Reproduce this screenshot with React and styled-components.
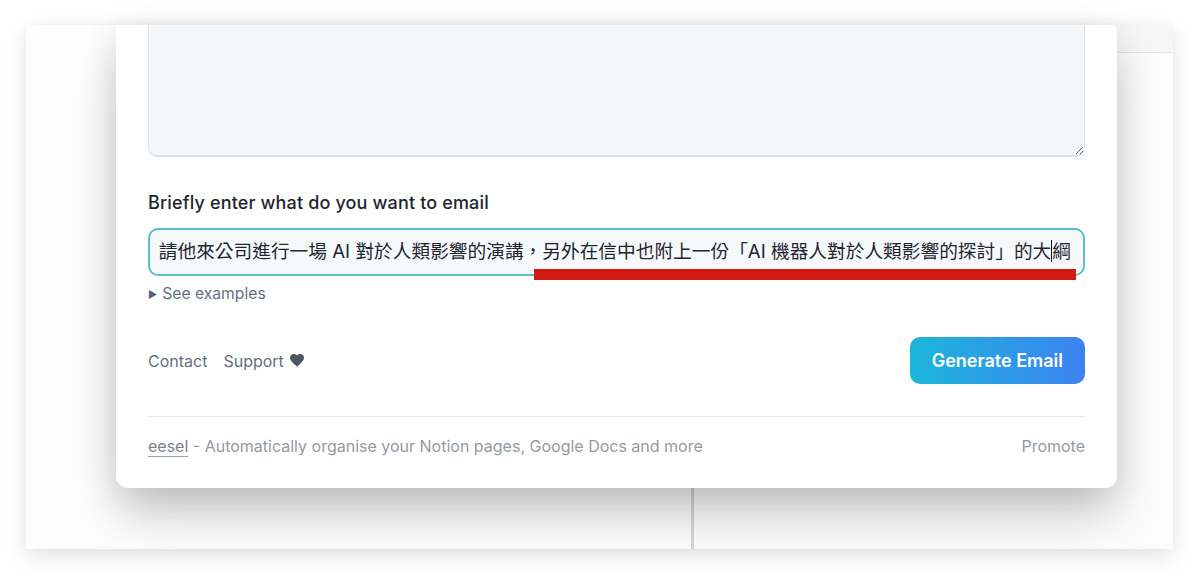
import React from 'react';
import styled, { createGlobalStyle } from 'styled-components';

const Global = createGlobalStyle`
  html, body {
    margin: 0;
    padding: 0;
    background: #ffffff;
  }
  * { box-sizing: border-box; }
`;

export default function App() {
  return (
    <>
      <Global />
      <Page>
        <Window>
          <LeftPane />
          <RightPane>
            <PaneHeader />
          </RightPane>

          <Modal>
            <TextArea defaultValue="" />

            <Label>Briefly enter what do you want to email</Label>
            <InputWrap>
              <InputBox>
                <InputText>
                  請他來公司進行一場 AI 對於人類影響的演講，另外在信中也附上一份「AI 機器人對於人類影響的探討」的大
                  <Caret />
                  綱
                </InputText>
              </InputBox>
              <Mark />
            </InputWrap>

            <Examples>
              <Triangle>▶</Triangle>See examples
            </Examples>

            <Actions>
              <Links>
                <LinkText>Contact</LinkText>
                <LinkText>
                  Support
                  <svg width="14" height="13" viewBox="0 0 24 22" fill="#4b5563">
                    <path d="M12 21.5 10.3 20C4.2 14.5 0 10.8 0 6.3 0 2.7 2.8 0 6.4 0c2.1 0 4.1 1 5.6 2.5C13.5 1 15.5 0 17.6 0 21.2 0 24 2.7 24 6.3c0 4.5-4.2 8.2-10.3 13.7L12 21.5Z" />
                  </svg>
                </LinkText>
              </Links>
              <Button>Generate Email</Button>
            </Actions>

            <Divider />

            <Footer>
              <FooterText>
                <Brand>eesel</Brand> - Automatically organise your Notion pages, Google Docs and more
              </FooterText>
              <FooterText>Promote</FooterText>
            </Footer>
          </Modal>
        </Window>
      </Page>
    </>
  );
}

const Page = styled.div`
  width: 1200px;
  height: 577px;
  padding: 25px 27px 28px 26px;
  overflow: hidden;
`;

const Window = styled.div`
  position: relative;
  display: flex;
  width: 1147px;
  height: 524px;
  background: #ffffff;
  box-shadow: 0 8px 22px rgba(0, 0, 0, 0.1), 0 0 12px rgba(0, 0, 0, 0.04);
`;

const LeftPane = styled.div`
  width: 668px;
  height: 100%;
  background: #fdfdfd;
  border-right: 3px solid #d6d6d6;
`;

const RightPane = styled.div`
  flex: 1;
  height: 100%;
  background: #fcfcfc;
`;

const PaneHeader = styled.div`
  height: 28px;
  border-bottom: 1px solid #e6e6e6;
  background: #f6f6f6;
`;

const Modal = styled.div`
  position: absolute;
  left: 90px;
  top: 0;
  width: 1001px;
  height: 463px;
  padding: 0 32px;
  display: flex;
  flex-direction: column;
  background: #ffffff;
  border-radius: 0 6px 12px 12px;
  overflow: hidden;
  box-shadow: 0 30px 50px -4px rgba(0, 0, 0, 0.2), 0 6px 34px rgba(0, 0, 0, 0.1);
  font-family: Inter, "Noto Sans CJK TC", sans-serif;
`;

const TextArea = styled.textarea`
  display: block;
  width: 100%;
  height: 142px;
  margin-top: -10px;
  background: #f5f8fb;
  border: 1px solid #dce2e8;
  border-bottom-width: 2px;
  border-radius: 9px;
  resize: vertical;
  outline: none;
`;

const Label = styled.div`
  margin-top: 34px;
  font-size: 18px;
  letter-spacing: 0.15px;
  line-height: 24px;
  font-weight: 500;
  color: #1e2530;
`;

const InputWrap = styled.div`
  position: relative;
  margin-top: 13px;
`;

const InputBox = styled.div`
  height: 48px;
  display: flex;
  align-items: center;
  justify-content: flex-end;
  padding: 0 12px 0 2px;
  background: #f6f9fb;
  border: 2px solid #5abdca;
  border-radius: 10px;
  overflow: hidden;
`;

const InputText = styled.span`
  white-space: nowrap;
  font-size: 18.7px;
  line-height: 24px;
  color: #1f2630;
`;

const Caret = styled.span`
  display: inline-block;
  width: 0;
  height: 22px;
  border-left: 1.5px solid #111;
  vertical-align: middle;
  margin-top: -3px;
`;

const Mark = styled.div`
  position: absolute;
  left: 386px;
  top: 41px;
  width: 542px;
  height: 11px;
  background: #d21b10;
`;

const Examples = styled.div`
  margin-top: 8px;
  display: flex;
  align-items: center;
  font-size: 15.7px;
  line-height: 20px;
  color: #667080;
`;

const Triangle = styled.span`
  font-size: 10px;
  margin-right: 5px;
  color: #556070;
`;

const Actions = styled.div`
  margin-top: 33px;
  display: flex;
  align-items: center;
  justify-content: space-between;
`;

const Links = styled.div`
  display: flex;
  align-items: center;
  gap: 16px;
`;

const LinkText = styled.span`
  display: inline-flex;
  align-items: center;
  gap: 6px;
  font-size: 16px;
  color: #64707f;
`;

const Button = styled.button`
  height: 47px;
  padding: 0 22px;
  border: none;
  border-radius: 10px;
  background: linear-gradient(90deg, #1cb6da 0%, #3d82f2 100%);
  color: #ffffff;
  font-family: Inter, sans-serif;
  font-size: 18px;
  font-weight: 600;
  cursor: pointer;
`;

const Divider = styled.div`
  margin-top: 32px;
  height: 1px;
  background: #e6e9ed;
  box-shadow: 0 1px 1px rgba(0, 0, 0, 0.03);
`;

const Footer = styled.div`
  margin-top: 19px;
  display: flex;
  justify-content: space-between;
  align-items: center;
`;

const FooterText = styled.span`
  font-size: 16px;
  line-height: 20px;
  color: #949aa4;
`;

const Brand = styled.span`
  color: #7c838f;
  text-decoration: underline;
  text-underline-offset: 4px;
  text-decoration-color: #9aa0a9;
`;
